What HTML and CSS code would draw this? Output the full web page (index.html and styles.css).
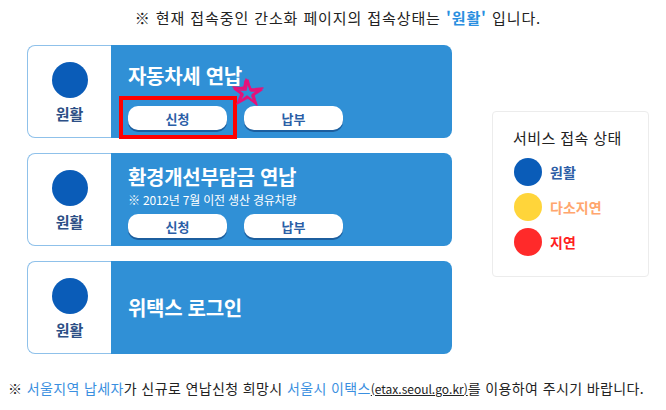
FILE: index.html
```html
<!DOCTYPE html>
<html lang="ko">
<head>
<meta charset="utf-8">
<link rel="stylesheet" href="styles.css">
</head>
<body>
<p class="notice">※ 현재 접속중인 간소화 페이지의 접속상태는 <b class="ok">'원활'</b> 입니다.</p>
<div class="main">
  <div class="cards">
    <div class="card card-1">
      <div class="status"><span class="dot"></span><span class="status-label">원활</span></div>
      <div class="body">
        <h2 class="title">자동차세 연납</h2>
        <div class="btns"><a class="btn">신청</a><a class="btn">납부</a></div>
      </div>
      <div class="highlight"></div>
      <svg class="star" width="32" height="28" viewBox="0 0 32 28">
        <g fill="none" stroke="#e6127a" stroke-width="1.4" stroke-linejoin="round" stroke-linecap="round">
          <path d="M14 1 L19 11 L31 10 L21 16 L25 27 L16 19 L6 25 L10 15 L1 9 L12 10 Z"/>
          <path d="M15 2 L18 12 L29 11 L20 17 L23 25 L15 18 L7 24 L11 16 L3 10 L13 11 Z"/>
          <path d="M13 3 L20 12 L30 12 L22 17 L24 26 L16 20 L5 26 L9 16 L2 11 L12 9 Z"/>
          <path d="M16 2 L19 13 L28 13 L20 18 L22 24 L15 19 L8 23 L11 17 L4 12 L14 12 Z"/>
        </g>
      </svg>
    </div>
    <div class="card card-2">
      <div class="status"><span class="dot"></span><span class="status-label">원활</span></div>
      <div class="body">
        <h2 class="title">환경개선부담금 연납</h2>
        <p class="sub">※ 2012년 7월 이전 생산 경유차량</p>
        <div class="btns"><a class="btn">신청</a><a class="btn">납부</a></div>
      </div>
    </div>
    <div class="card card-3">
      <div class="status"><span class="dot"></span><span class="status-label">원활</span></div>
      <div class="body">
        <h2 class="title">위택스 로그인</h2>
      </div>
    </div>
  </div>
  <aside class="legend">
    <h3 class="legend-title">서비스 접속 상태</h3>
    <ul class="legend-list">
      <li class="item"><span class="ldot blue"></span><span class="lbl lbl-blue">원활</span></li>
      <li class="item"><span class="ldot yellow"></span><span class="lbl lbl-yellow">다소지연</span></li>
      <li class="item"><span class="ldot red"></span><span class="lbl lbl-red">지연</span></li>
    </ul>
  </aside>
</div>
<p class="foot">※ <span class="hl">서울지역 납세자</span>가 신규로 연납신청 희망시 <span class="hl">서울시 이택스</span><span class="url">(etax.seoul.go.kr)</span>를 이용하여 주시기 바랍니다.</p>
</body>
</html>
```
FILE: styles.css
```css
* { box-sizing: border-box; }
body {
  margin: 0;
  width: 666px;
  height: 410px;
  background: #fff;
  font-family: "Noto Sans CJK KR", "Noto Sans", sans-serif;
  color: #222;
}
.notice {
  margin: 0;
  padding-top: 7px;
  height: 34px;
  line-height: 22px;
  font-size: 15px;
  text-align: center;
  padding-left: 10px;
  letter-spacing: 0.9px;
  color: #222;
}
.notice .ok { color: #2a8fe0; font-weight: 700; }
.main {
  display: flex;
  padding-left: 27px;
  margin-top: 11px;
  gap: 40px;
}
.cards {
  display: flex;
  flex-direction: column;
  gap: 15px;
  width: 425px;
}
.card {
  position: relative;
  display: flex;
  height: 93px;
}
.status {
  width: 84px;
  border: 1px solid #8fc1ea;
  border-right: none;
  border-radius: 8px 0 0 8px;
  background: #fff;
  display: flex;
  flex-direction: column;
  align-items: center;
  padding-top: 16px;
}
.dot {
  width: 36px;
  height: 36px;
  border-radius: 50%;
  background: #0a5cb8;
}
.status-label {
  margin-top: 5px;
  font-size: 15px;
  font-weight: 700;
  color: #2c4f86;
  line-height: 22px;
}
.body {
  flex: 1;
  background: #3090d6;
  border-radius: 0 8px 8px 0;
  padding-left: 17px;
  display: flex;
  flex-direction: column;
  align-items: flex-start;
}
.title {
  margin: 0;
  font-size: 20px;
  line-height: 24px;
  font-weight: 700;
  color: #fff;
  letter-spacing: -0.3px;
}
.card-1 .body { padding-top: 19px; }
.card-1 .btns { margin-top: 18px; }
.card-2 .body { padding-top: 12px; }
.card-2 .sub { margin: 3px 0 0; }
.card-2 .btns { margin-top: 6px; }
.card-3 .body { justify-content: center; }
.sub {
  font-size: 12px;
  line-height: 16px;
  color: #fff;
  letter-spacing: -0.2px;
}
.btns { display: flex; gap: 17px; }
.btn {
  width: 99px;
  height: 24px;
  background: #fff;
  border-radius: 10px;
  box-shadow: 0 2px 0 #1c5e9e;
  font-size: 13px;
  font-weight: 700;
  color: #2a5ea6;
  display: flex;
  align-items: center;
  justify-content: center;
}
.highlight {
  position: absolute;
  left: 92px;
  top: 51px;
  width: 118px;
  height: 43px;
  border: 4px solid #ff0000;
}
.star {
  position: absolute;
  left: 205px;
  top: 33px;
}
.legend {
  margin-top: 66px;
  width: 157px;
  height: 166px;
  border: 1px solid #ececec;
  border-radius: 4px;
  padding: 16px 0 0 20px;
}
.legend-title {
  margin: 0;
  font-size: 15px;
  font-weight: 400;
  line-height: 20px;
  color: #222;
  letter-spacing: 0.4px;
}
.legend-list {
  list-style: none;
  margin: 10px 0 0;
  padding: 0 0 0 1px;
  display: flex;
  flex-direction: column;
  gap: 7px;
}
.item { display: flex; align-items: center; gap: 8px; height: 28px; }
.ldot { width: 28px; height: 28px; border-radius: 50%; }
.blue { background: #0a5cb8; }
.yellow { background: #ffd53a; }
.red { background: #ff2a2a; }
.lbl { font-size: 14px; font-weight: 700; }
.lbl-blue { color: #2c5da6; }
.lbl-yellow { color: #ffa66e; }
.lbl-red { color: #ff2020; }
.foot {
  margin: 24px 0 0;
  padding-left: 8px;
  font-size: 14px;
  line-height: 20px;
  color: #222;
  white-space: nowrap;
  letter-spacing: 0.38px;
}
.foot .hl { color: #3a8fe0; }
.foot .url { font-size: 12px; text-decoration: underline; letter-spacing: 0; }
```
